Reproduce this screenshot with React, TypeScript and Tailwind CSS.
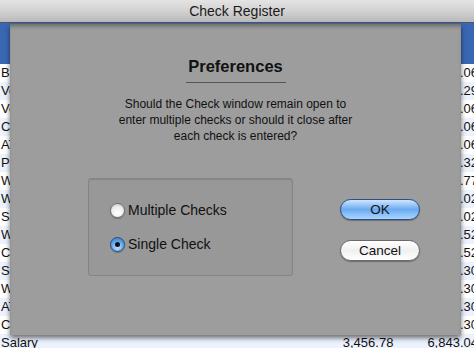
const rows = [
  { name: "Bradley", a: "", b: "1,210.06" },
  { name: "Verizon", a: "", b: "1,150.29" },
  { name: "Verizon", a: "", b: "1,080.06" },
  { name: "Cable", a: "", b: "1,020.06" },
  { name: "ATM", a: "", b: "940.06" },
  { name: "Pepco", a: "", b: "860.32" },
  { name: "Walmart", a: "", b: "780.77" },
  { name: "Walmart", a: "", b: "700.02" },
  { name: "Sonic", a: "", b: "650.02" },
  { name: "WSSC", a: "", b: "600.52" },
  { name: "Cash", a: "", b: "550.52" },
  { name: "Safeway", a: "", b: "500.30" },
  { name: "Walgreens", a: "", b: "450.30" },
  { name: "ATM", a: "", b: "400.30" },
  { name: "Chevron", a: "", b: "350.30" },
  { name: "Salary", a: "3,456.78", b: "6,843.04" },
];

function Radio({ checked }: { checked: boolean }) {
  if (checked) {
    return (
      <span className="flex h-[15px] w-[15px] items-center justify-center rounded-full border border-[#2e4f7c] bg-[radial-gradient(circle_at_50%_70%,#c4e3ff_0%,#5aa3ec_55%,#2f6fc0_100%)] shadow-[0_1px_1px_rgba(0,0,0,0.25)]">
        <span className="h-[5px] w-[5px] rounded-full bg-[#111]" />
      </span>
    );
  }
  return (
    <span className="h-[15px] w-[15px] rounded-full border border-[#6f6f6f] bg-[radial-gradient(circle_at_50%_70%,#ffffff_0%,#f0f0f0_50%,#c4c4c4_100%)] shadow-[0_1px_1px_rgba(0,0,0,0.25)]" />
  );
}

export default function App() {
  return (
    <div
      className="relative h-[348px] w-[474px] overflow-hidden bg-white text-[13px] text-[#111]"
      style={{ fontFamily: '"Liberation Sans", Arial, sans-serif' }}
    >
      {/* window title bar */}
      <div className="flex h-[23px] items-center justify-center border-b border-[#555] bg-gradient-to-b from-[#e4e4e4] via-[#d2d2d2] to-[#b9b9b9] text-[14px] text-[#1a1a1a]">
        Check Register
      </div>

      {/* register table behind the sheet */}
      <div className="h-[41px] bg-[#3a67b3]" />
      {rows.map((r, i) => (
        <div
          key={i}
          className={`flex h-[18px] w-[478px] items-center justify-between leading-[18px] ${
            i % 2 === 0 ? "bg-white" : "bg-[#edf3fe]"
          }`}
        >
          <span className="pl-[1px]">{r.name}</span>
          <span className="flex gap-[34px]">
            {r.a && <span>{r.a}</span>}
            <span className="whitespace-nowrap">{r.b}</span>
          </span>
        </div>
      ))}

      {/* preferences sheet */}
      <div className="absolute left-[10px] top-[24px] flex h-[311px] w-[451px] flex-col items-center bg-[#9d9d9d] shadow-[0_3px_5px_rgba(0,0,0,0.55),inset_0_4px_4px_-2px_rgba(0,0,0,0.35)]">
        <div className="mt-[32px] text-[16.5px] font-bold leading-[20px]">Preferences</div>
        <div className="mt-[6px] h-px w-[100px] bg-[#555]" />
        <p className="mt-[13px] text-center text-[12px] leading-[16px]">
          Should the Check window remain open to
          <br />
          enter multiple checks or should it close after
          <br />
          each check is entered?
        </p>

        <div className="mt-[34px] flex w-full pl-[78px]">
          <div className="flex h-[98px] w-[205px] flex-col gap-[14px] rounded-[3px] border border-[#848484] bg-[#989898] pl-[21px] pt-[21px] text-[14px] shadow-[inset_0_1px_1px_rgba(0,0,0,0.12)]">
            <label className="flex h-[20px] items-center gap-[3px]">
              <Radio checked={false} />
              Multiple Checks
            </label>
            <label className="flex h-[20px] items-center gap-[3px]">
              <Radio checked />
              Single Check
            </label>
          </div>

          <div className="ml-[47px] flex flex-col gap-[20px] pt-[21px]">
            <button className="h-[21px] w-[80px] rounded-full border border-[#2d4e7e] bg-gradient-to-b from-[#cfe6fd] via-[#6aaaf0] to-[#a9d6ff] text-[13.5px] leading-[19px] text-[#111] shadow-[0_1px_1px_rgba(0,0,0,0.3)]">
              OK
            </button>
            <button className="h-[21px] w-[80px] rounded-full border border-[#6a6a6a] bg-gradient-to-b from-[#ffffff] via-[#f0f0f0] to-[#ffffff] text-[13.5px] leading-[19px] text-[#111] shadow-[0_1px_1px_rgba(0,0,0,0.3)]">
              Cancel
            </button>
          </div>
        </div>
      </div>
    </div>
  );
}
